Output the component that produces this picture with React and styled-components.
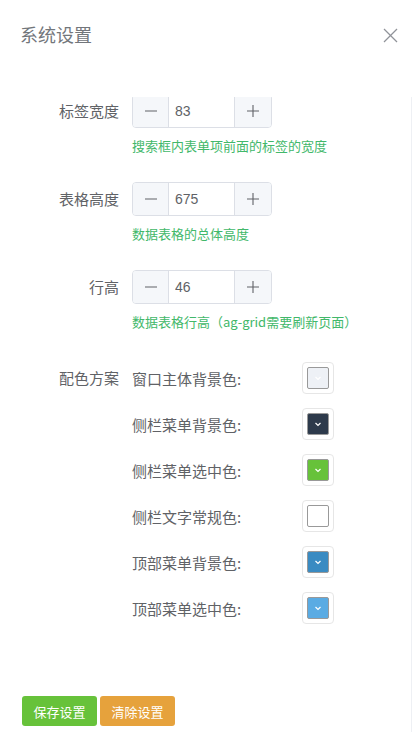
import React from "react";
import styled, { createGlobalStyle } from "styled-components";

const Global = createGlobalStyle`
  html, body { margin: 0; padding: 0; background: #fff; }
  body {
    font-family: "Liberation Sans", "Noto Sans CJK SC", sans-serif;
    -webkit-font-smoothing: antialiased;
  }
  * { box-sizing: border-box; }
`;

const Drawer = styled.div`
  width: 412px;
  height: 732px;
  display: flex;
  flex-direction: column;
  background: #fff;
  overflow: hidden;
`;

const Header = styled.div`
  height: 97px;
  flex: none;
  display: flex;
  justify-content: space-between;
  align-items: flex-start;
  padding: 22px 10px 0 20px;
`;

const Title = styled.span`
  font-family: "Noto Sans CJK SC", sans-serif;
  font-size: 18px;
  line-height: 24px;
  color: #72767b;
`;

const CloseBtn = styled.button`
  width: 24px;
  height: 26px;
  padding: 0;
  border: none;
  background: none;
  display: flex;
  align-items: center;
  justify-content: center;
`;

const Body = styled.div`
  flex: 1;
  overflow: hidden;
  border-right: 1px solid #eef0f4;
`;

/* content of the scroll pane, scrolled a few pixels down */
const Scrolled = styled.div`
  margin-top: -3px;
`;

const FormItem = styled.div`
  display: flex;
  align-items: flex-start;
  margin-bottom: ${(p) => p.$mb || 0}px;
`;

const Label = styled.label`
  width: 132px;
  flex: none;
  padding-right: 13px;
  text-align: right;
  font-family: "Noto Sans CJK SC", sans-serif;
  font-size: 15px;
  line-height: ${(p) => p.$lh || 34}px;
  color: #606266;
`;

const Field = styled.div`
  display: flex;
  flex-direction: column;
`;

const Stepper = styled.div`
  width: 140px;
  height: 34px;
  display: flex;
  border: 1px solid #dcdfe6;
  border-radius: 4px;
  overflow: hidden;
`;

const StepBtn = styled.span`
  width: ${(p) => p.$w}px;
  flex: none;
  background: #f5f7fa;
  display: flex;
  align-items: center;
  justify-content: center;
  ${(p) => (p.$side === "left" ? "border-right: 1px solid #dcdfe6;" : "border-left: 1px solid #dcdfe6;")}
`;

const NumInput = styled.input`
  flex: 1;
  min-width: 0;
  border: none;
  outline: none;
  padding: 0 0 0 6px;
  font-family: "Liberation Sans", sans-serif;
  font-size: 14px;
  color: #606266;
  background: #fff;
`;

const Hint = styled.div`
  margin-top: 8px;
  font-family: "Noto Sans CJK SC", sans-serif;
  font-size: 13px;
  line-height: 20px;
  color: #42b86a;
  white-space: nowrap;
`;

const ColorList = styled.div`
  display: flex;
  flex-direction: column;
  gap: 14px;
`;

const ColorRow = styled.div`
  display: flex;
  align-items: center;
  height: 32px;
`;

const SubLabel = styled.span`
  width: 170px;
  font-family: "Noto Sans CJK SC", sans-serif;
  font-size: 15px;
  color: #606266;
`;

const Picker = styled.span`
  width: 32px;
  height: 32px;
  padding: 4px;
  border: 1px solid #e6e6e6;
  border-radius: 4px;
  display: flex;
`;

const Swatch = styled.span`
  flex: 1;
  border: 1px solid #999;
  border-radius: 2px;
  background: ${(p) => p.$c};
  display: flex;
  align-items: center;
  justify-content: center;
`;

const Footer = styled.div`
  margin-top: 72px;
  padding-left: 22px;
  display: flex;
  gap: 3px;
`;

const Btn = styled.button`
  height: 30px;
  width: 75px;
  padding: 0;
  border: none;
  border-radius: 3px;
  background: ${(p) => p.$bg};
  color: #fff;
  font-family: "Noto Sans CJK SC", sans-serif;
  font-size: 13px;
`;

const Minus = () => (
  <svg width="14" height="14" viewBox="0 0 14 14">
    <line x1="1" y1="7" x2="13" y2="7" stroke="#606266" strokeWidth="1.1" />
  </svg>
);
const Plus = () => (
  <svg width="14" height="14" viewBox="0 0 14 14">
    <line x1="1" y1="7" x2="13" y2="7" stroke="#606266" strokeWidth="1.1" />
    <line x1="7" y1="1" x2="7" y2="13" stroke="#606266" strokeWidth="1.1" />
  </svg>
);
const Arrow = () => (
  <svg width="10" height="10" viewBox="0 0 10 10">
    <polyline points="2.5,4 5,6.5 7.5,4" fill="none" stroke="#fff" strokeWidth="1.2" />
  </svg>
);

const NumberField = ({ value }) => (
  <Stepper>
    <StepBtn $w={36} $side="left"><Minus /></StepBtn>
    <NumInput defaultValue={value} />
    <StepBtn $w={37} $side="right"><Plus /></StepBtn>
  </Stepper>
);

const colors = [
  ["窗口主体背景色:", "#eef1f6"],
  ["侧栏菜单背景色:", "#2d3a4b"],
  ["侧栏菜单选中色:", "#67c23a"],
  ["侧栏文字常规色:", "#ffffff"],
  ["顶部菜单背景色:", "#3a8bc2"],
  ["顶部菜单选中色:", "#5aabe3"],
];

export default function App() {
  return (
    <>
      <Global />
      <Drawer>
        <Header>
          <Title>系统设置</Title>
          <CloseBtn aria-label="close">
            <svg width="15" height="15" viewBox="0 0 15 15">
              <line x1="1" y1="1" x2="14" y2="14" stroke="#909399" strokeWidth="1.2" />
              <line x1="14" y1="1" x2="1" y2="14" stroke="#909399" strokeWidth="1.2" />
            </svg>
          </CloseBtn>
        </Header>
        <Body>
          <Scrolled>
            <FormItem $mb={26}>
              <Label>标签宽度</Label>
              <Field>
                <NumberField value="83" />
                <Hint>搜索框内表单项前面的标签的宽度</Hint>
              </Field>
            </FormItem>
            <FormItem $mb={26}>
              <Label>表格高度</Label>
              <Field>
                <NumberField value="675" />
                <Hint>数据表格的总体高度</Hint>
              </Field>
            </FormItem>
            <FormItem $mb={30}>
              <Label>行高</Label>
              <Field>
                <NumberField value="46" />
                <Hint>数据表格行高（ag-grid需要刷新页面）</Hint>
              </Field>
            </FormItem>
            <FormItem>
              <Label $lh={32}>配色方案</Label>
              <ColorList>
                {colors.map(([name, c]) => (
                  <ColorRow key={name}>
                    <SubLabel>{name}</SubLabel>
                    <Picker>
                      <Swatch $c={c}><Arrow /></Swatch>
                    </Picker>
                  </ColorRow>
                ))}
              </ColorList>
            </FormItem>
            <Footer>
              <Btn $bg="#67c23a">保存设置</Btn>
              <Btn $bg="#e6a23c">清除设置</Btn>
            </Footer>
          </Scrolled>
        </Body>
      </Drawer>
    </>
  );
}
